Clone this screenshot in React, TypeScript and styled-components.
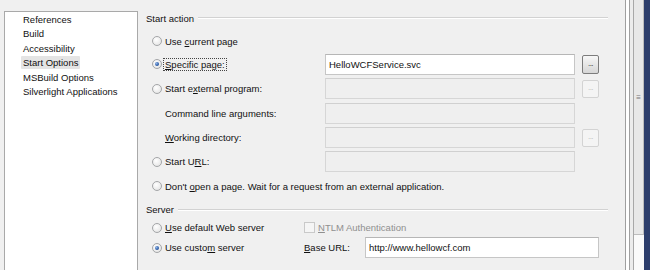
import React from "react";
import styled, { createGlobalStyle } from "styled-components";

const GlobalStyle = createGlobalStyle`
  * { box-sizing: border-box; }
  html, body {
    margin: 0;
    padding: 0;
    background: #f0f0f0;
  }
  body {
    font-family: "Liberation Sans", Arial, sans-serif;
    font-size: 9.5px;
    color: #111111;
  }
`;

const Window = styled.div`
  display: flex;
  width: 650px;
  height: 270px;
  overflow: hidden;
  background: #f0f0f0;
`;

const NavPanel = styled.ul`
  list-style: none;
  margin: 11px 0 0 4px;
  padding: 1px 0 0 0;
  width: 134px;
  height: 259px;
  flex-shrink: 0;
  background: #ffffff;
  border: 1px solid #a9a9a9;
  border-bottom: none;
`;

const NavItem = styled.li`
  height: 14.4px;
  line-height: 14.4px;
  padding-left: 16px;
  white-space: nowrap;
`;

const NavText = styled.span<{ $selected?: boolean }>`
  padding: 1px 2px;
  border-radius: 1px;
  background: ${({ $selected }) => ($selected ? "#e4e4e4" : "transparent")};
`;

const Content = styled.div`
  flex: 1;
  display: flex;
  flex-direction: column;
  padding: 11px 5px 0 8px;
`;

const SectionHeader = styled.div<{ $top?: number }>`
  display: flex;
  align-items: center;
  gap: 4px;
  height: 14px;
  margin-top: ${({ $top }) => $top ?? 0}px;
`;

const SectionLine = styled.div`
  flex: 1;
  height: 2px;
  border-top: 1px solid #d2d2d2;
  border-bottom: 1px solid #ffffff;
`;

const StartGrid = styled.div`
  display: grid;
  grid-template-columns: 166px 250px 17px;
  grid-template-rows: 20px repeat(6, 22px);
  column-gap: 7px;
  row-gap: 2.4px;
  align-items: center;
  margin: 6px 0 0 6px;
`;

const ServerGrid = styled.div`
  display: grid;
  grid-template-columns: 152px 61px 234px;
  grid-template-rows: 18px 22px;
  align-items: center;
  margin: 2px 0 0 6px;
`;

const Option = styled.label<{ $span?: number; $muted?: boolean }>`
  display: flex;
  align-items: center;
  gap: 3px;
  white-space: nowrap;
  grid-column: ${({ $span }) => ($span ? `span ${$span}` : "auto")};
  color: ${({ $muted }) => ($muted ? "#8f8f8f" : "inherit")};
`;

const SubLabel = styled.span`
  padding-left: 13px;
  white-space: nowrap;
`;

const Radio = styled.span<{ $checked?: boolean }>`
  position: relative;
  width: 10px;
  height: 10px;
  flex-shrink: 0;
  border-radius: 50%;
  border: 1px solid #a4a6a8;
  background: radial-gradient(circle at 40% 35%, #ffffff 0%, #e9e9e9 70%, #d4d4d4 100%);

  &::after {
    content: "";
    display: ${({ $checked }) => ($checked ? "block" : "none")};
    position: absolute;
    left: 2px;
    top: 2px;
    width: 4px;
    height: 4px;
    border-radius: 50%;
    background: radial-gradient(circle at 35% 35%, #8fb4e8 0%, #2f5fa8 60%, #1d3f7c 100%);
  }
`;

const Checkbox = styled.span`
  width: 11px;
  height: 11px;
  flex-shrink: 0;
  border: 1px solid #c9c9c9;
  background: #f5f5f5;
`;

const Key = styled.span`
  text-decoration: underline;
`;

const Focus = styled.span`
  outline: 1px dotted #444;
  padding: 0 1px;
  margin-left: -1px;
`;

const TextBox = styled.div<{ $disabled?: boolean }>`
  height: 21px;
  display: flex;
  align-items: center;
  padding: 0 3px;
  white-space: nowrap;
  background: ${({ $disabled }) => ($disabled ? "#efefef" : "#ffffff")};
  border: 1px solid ${({ $disabled }) => ($disabled ? "#d6d6d6" : "#c6c6c6")};
  border-top-color: ${({ $disabled }) => ($disabled ? "#d0d0d0" : "#b6b6b6")};
`;

const BrowseButton = styled.div<{ $disabled?: boolean }>`
  width: 17px;
  height: ${({ $disabled }) => ($disabled ? 18 : 19)}px;
  display: flex;
  align-items: flex-end;
  justify-content: center;
  padding-bottom: 5px;
  font-size: 8px;
  line-height: 1;
  letter-spacing: -0.5px;
  border-radius: 2px;
  color: ${({ $disabled }) => ($disabled ? "#b9b9b9" : "#222")};
  border: 1px solid ${({ $disabled }) => ($disabled ? "#d3d3d3" : "#7c7c7c")};
  background: ${({ $disabled }) =>
    $disabled ? "#f4f4f4" : "linear-gradient(#f7f7f7, #e6e6e6 50%, #d6d6d6)"};
`;

const RightEdge = styled.div`
  display: flex;
  width: 37px;
  flex-shrink: 0;
  height: 270px;
`;

const EdgeStrip = styled.div<{ $w: number; $bg: string }>`
  width: ${({ $w }) => $w}px;
  background: ${({ $bg }) => $bg};
`;

const ScrollTrack = styled.div`
  width: 10px;
  display: flex;
  flex-direction: column;
  background: #fafafa;
`;

const ScrollThumb = styled.div`
  height: 235px;
  display: flex;
  align-items: center;
  justify-content: center;
  background: #e8e8e8;
  border-right: 1px solid #bdbdbd;
  border-bottom: 1px solid #bdbdbd;
  color: #777;
  font-size: 8px;
  padding-bottom: 40px;
`;

const navItems = [
  "References",
  "Build",
  "Accessibility",
  "Start Options",
  "MSBuild Options",
  "Silverlight Applications",
];

export default function App() {
  return (
    <>
      <GlobalStyle />
      <Window>
        <NavPanel>
          {navItems.map((item) => (
            <NavItem key={item}>
              <NavText $selected={item === "Start Options"}>{item}</NavText>
            </NavItem>
          ))}
        </NavPanel>

        <Content>
          <SectionHeader>
            <span>Start action</span>
            <SectionLine />
          </SectionHeader>

          <StartGrid>
            <Option $span={3}>
              <Radio />
              <span>
                Use <Key>c</Key>urrent page
              </span>
            </Option>

            <Option>
              <Radio $checked />
              <Focus>
                <Key>S</Key>pecific page:
              </Focus>
            </Option>
            <TextBox>HelloWCFService.svc</TextBox>
            <BrowseButton>...</BrowseButton>

            <Option>
              <Radio />
              <span>
                Start e<Key>x</Key>ternal program:
              </span>
            </Option>
            <TextBox $disabled />
            <BrowseButton $disabled>...</BrowseButton>

            <SubLabel>Command line arguments:</SubLabel>
            <TextBox $disabled />
            <span />

            <SubLabel>
              <Key>W</Key>orking directory:
            </SubLabel>
            <TextBox $disabled />
            <BrowseButton $disabled>...</BrowseButton>

            <Option>
              <Radio />
              <span>
                Start U<Key>R</Key>L:
              </span>
            </Option>
            <TextBox $disabled />
            <span />

            <Option $span={3}>
              <Radio />
              <span>
                Don't <Key>o</Key>pen a page. Wait for a request from an external application.
              </span>
            </Option>
          </StartGrid>

          <SectionHeader $top={5.6}>
            <span>Server</span>
            <SectionLine />
          </SectionHeader>

          <ServerGrid>
            <Option>
              <Radio />
              <span>
                <Key>U</Key>se default Web server
              </span>
            </Option>
            <Option $span={2} $muted>
              <Checkbox />
              <span>
                <Key>N</Key>TLM Authentication
              </span>
            </Option>

            <Option>
              <Radio $checked />
              <span>
                Use custo<Key>m</Key> server
              </span>
            </Option>
            <span>
              <Key>B</Key>ase URL:
            </span>
            <TextBox>http://www.hellowcf.com</TextBox>
          </ServerGrid>
        </Content>

        <RightEdge>
          <EdgeStrip $w={12} $bg="#f0f0f0" />
          <EdgeStrip $w={1} $bg="#9f9f9f" />
          <EdgeStrip $w={3} $bg="#ffffff" />
          <EdgeStrip $w={1} $bg="#9f9f9f" />
          <EdgeStrip $w={3} $bg="#ececec" />
          <EdgeStrip $w={1} $bg="#a8a8a8" />
          <ScrollTrack>
            <ScrollThumb>≡</ScrollThumb>
          </ScrollTrack>
          <EdgeStrip $w={6} $bg="#2d3e6c" />
        </RightEdge>
      </Window>
    </>
  );
}
